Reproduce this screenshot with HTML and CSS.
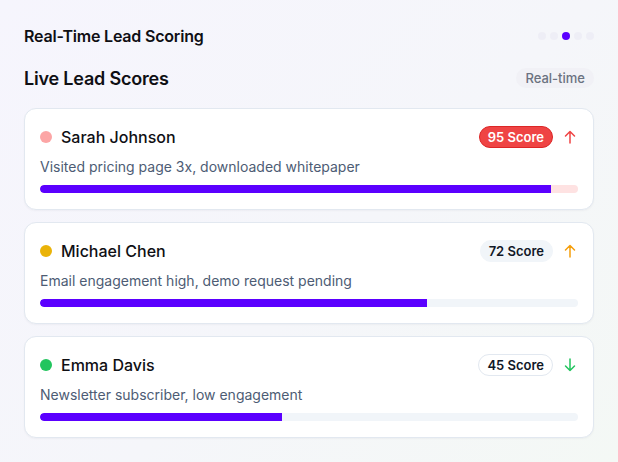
FILE: index.html
```html
<!DOCTYPE html>
<html lang="en">
	<head>
		<meta charset="UTF-8" />
		<meta name="viewport" content="width=device-width, initial-scale=1.0" />
		<title>Real-Time Lead Scoring</title>
		<link rel="stylesheet" href="styles.css">
	</head>
	<body>
		<div class="main">
			<div class="top">
				<h2>Real-Time Lead Scoring</h2>
				<div class="dots">
					<span></span>
					<span></span>
					<span class="on"></span>
					<span></span>
					<span></span>
				</div>
			</div>

			<div class="head">
				<h1>Live Lead Scores</h1>
				<span class="pill">Real-time</span>
			</div>

			<div class="list">
				<div class="card">
					<div class="row">
						<span class="dot hot"></span>
						<span class="name">Sarah Johnson</span>
						<span class="badge badge-hot">95 Score</span>
						<svg class="arrow" width="12" height="14" viewBox="0 0 12 14" fill="none" stroke="#ef4444" stroke-width="1.5" stroke-linecap="round" stroke-linejoin="round"><path d="M6 13V1.5M1.5 6L6 1.5L10.5 6" /></svg>
					</div>
					<p class="desc">Visited pricing page 3x, downloaded whitepaper</p>
					<div class="bar bar-hot"><div class="fill" style="width: 95%"></div></div>
				</div>

				<div class="card">
					<div class="row">
						<span class="dot warm"></span>
						<span class="name">Michael Chen</span>
						<span class="badge badge-warm">72 Score</span>
						<svg class="arrow" width="12" height="14" viewBox="0 0 12 14" fill="none" stroke="#f59e0b" stroke-width="1.5" stroke-linecap="round" stroke-linejoin="round"><path d="M6 13V1.5M1.5 6L6 1.5L10.5 6" /></svg>
					</div>
					<p class="desc">Email engagement high, demo request pending</p>
					<div class="bar"><div class="fill" style="width: 72%"></div></div>
				</div>

				<div class="card">
					<div class="row">
						<span class="dot cold"></span>
						<span class="name">Emma Davis</span>
						<span class="badge badge-cold">45 Score</span>
						<svg class="arrow" width="12" height="14" viewBox="0 0 12 14" fill="none" stroke="#22c55e" stroke-width="1.5" stroke-linecap="round" stroke-linejoin="round"><path d="M6 1V12.5M1.5 8L6 12.5L10.5 8" /></svg>
					</div>
					<p class="desc">Newsletter subscriber, low engagement</p>
					<div class="bar"><div class="fill" style="width: 45%"></div></div>
				</div>
			</div>
		</div>
	</body>
</html>
```

FILE: styles.css
```css
html,
body {
	margin: 0;
	height: 100%;
}

body {
	font-family: Inter, "Liberation Sans", sans-serif;
	background: linear-gradient(135deg, #f6f5fd 0%, #f5f6fa 55%, #f4f8f5 100%);
	color: #0f0f14;
}

.main {
	padding: 24px 24px 0 24px;
	display: flex;
	flex-direction: column;
}

.top {
	display: flex;
	justify-content: space-between;
	align-items: center;
	height: 24px;
}

.top h2 {
	margin: 0;
	font-size: 16px;
	font-weight: 600;
	letter-spacing: -0.2px;
}

.dots {
	display: flex;
	gap: 4px;
}

.dots span {
	width: 8px;
	height: 8px;
	border-radius: 50%;
	background-color: #eeeef6;
}

.dots span.on {
	background-color: #5b00ff;
}

.head {
	display: flex;
	justify-content: space-between;
	align-items: center;
	margin-top: 18px;
	height: 24px;
}

.head h1 {
	margin: 0;
	font-size: 18px;
	font-weight: 600;
	letter-spacing: -0.2px;
}

.pill {
	font-size: 13px;
	font-weight: 500;
	color: #6b7280;
	background-color: #f1f1f6;
	padding: 0 9px;
	height: 20px;
	line-height: 20px;
	border-radius: 10px;
}

.list {
	display: flex;
	flex-direction: column;
	gap: 12px;
	margin-top: 18px;
}

.card {
	background-color: #fff;
	border: 1px solid #e2e8f0;
	border-radius: 12px;
	padding: 16px 15px;
	box-shadow: 0 1px 2px rgba(15, 23, 42, 0.04);
}

.row {
	display: flex;
	align-items: center;
	height: 24px;
}

.dot {
	width: 12px;
	height: 12px;
	border-radius: 50%;
	margin-right: 9px;
}

.hot {
	background-color: #fca5a5;
}

.warm {
	background-color: #eab308;
}

.cold {
	background-color: #22c55e;
}

.name {
	font-size: 16px;
	font-weight: 500;
	flex: 1;
}

.badge {
	font-size: 13px;
	font-weight: 600;
	padding: 0 8px;
	height: 20px;
	line-height: 20px;
	border-radius: 11px;
	border: 1px solid transparent;
	margin-right: 11px;
}

.badge-hot {
	background-color: #ef4444;
	border-color: #dc2626;
	color: #fff;
}

.badge-warm {
	background-color: #f1f5f9;
	border-color: #f1f5f9;
	color: #111827;
}

.badge-cold {
	background-color: #fff;
	border-color: #e2e8f0;
	color: #111827;
}

.arrow {
	margin-right: 2px;
}

.desc {
	margin: 8px 0 0 0;
	font-size: 14px;
	color: #4d5c74;
	height: 20px;
	line-height: 20px;
}

.bar {
	margin-top: 8px;
	height: 8px;
	border-radius: 4px;
	background-color: #f1f5f9;
	overflow: hidden;
}

.bar-hot {
	background-color: #fee2e2;
}

.fill {
	height: 100%;
	background-color: #5b00ff;
	border-radius: 4px 0 0 4px;
}
```
